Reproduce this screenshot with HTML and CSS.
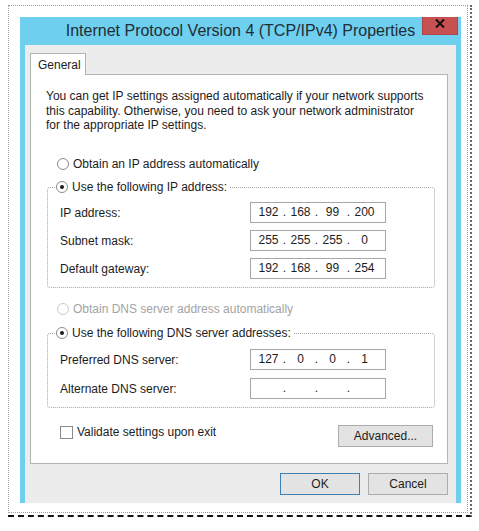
FILE: index.html
```html
<!doctype html>
<html lang="en">
    <head>
        <meta charset="UTF-8" />
        <meta name="viewport" content="width=device-width, initial-scale=1.0" />
        <title>Internet Protocol Version 4 (TCP/IPv4) Properties</title>
        <link rel="stylesheet" href="styles.css">
    </head>
    <body>
        <div class="frame">
            <div class="sheet">
                <div class="window">
                    <div class="titlebar">
                        <span></span>
                        <h1 class="title">Internet Protocol Version 4 (TCP/IPv4) Properties</h1>
                        <button class="close" type="button" aria-label="Close">
                            <svg width="10" height="9" viewBox="0 0 10 9">
                                <path d="M1 0.5 L9 8.5 M9 0.5 L1 8.5" stroke="#111" stroke-width="2" />
                            </svg>
                        </button>
                    </div>

                    <div class="client">
                        <div class="tabs">
                            <div class="tab">General</div>
                        </div>

                        <div class="panel">
                            <p class="intro">
                                You can get IP settings assigned automatically if your network supports
                                this capability. Otherwise, you need to ask your network administrator
                                for the appropriate IP settings.
                            </p>

                            <div class="option">
                                <span class="radio"></span>Obtain an IP address automatically
                            </div>

                            <fieldset class="group">
                                <legend>
                                    <span class="option"><span class="radio checked"></span>Use the following IP address:</span>
                                </legend>
                                <div class="field">
                                    <span>IP address:</span>
                                    <div class="ip">
                                        <span>192</span><i>.</i><span>168</span><i>.</i><span>99</span><i>.</i><span>200</span>
                                    </div>
                                </div>
                                <div class="field">
                                    <span>Subnet mask:</span>
                                    <div class="ip">
                                        <span>255</span><i>.</i><span>255</span><i>.</i><span>255</span><i>.</i><span>0</span>
                                    </div>
                                </div>
                                <div class="field">
                                    <span>Default gateway:</span>
                                    <div class="ip">
                                        <span>192</span><i>.</i><span>168</span><i>.</i><span>99</span><i>.</i><span>254</span>
                                    </div>
                                </div>
                            </fieldset>

                            <div class="option disabled dns-auto">
                                <span class="radio"></span>Obtain DNS server address automatically
                            </div>

                            <fieldset class="group dns">
                                <legend>
                                    <span class="option"><span class="radio checked"></span>Use the following DNS server addresses:</span>
                                </legend>
                                <div class="field">
                                    <span>Preferred DNS server:</span>
                                    <div class="ip">
                                        <span>127</span><i>.</i><span>0</span><i>.</i><span>0</span><i>.</i><span>1</span>
                                    </div>
                                </div>
                                <div class="field">
                                    <span>Alternate DNS server:</span>
                                    <div class="ip">
                                        <span></span><i>.</i><span></span><i>.</i><span></span><i>.</i><span></span>
                                    </div>
                                </div>
                            </fieldset>

                            <div class="panel-bottom">
                                <div class="check-row">
                                    <span class="checkbox"></span>Validate settings upon exit
                                </div>
                                <button class="btn advanced" type="button">Advanced...</button>
                            </div>
                        </div>

                        <div class="footer">
                            <button class="btn default" type="button">OK</button>
                            <button class="btn" type="button">Cancel</button>
                        </div>
                    </div>
                </div>
            </div>
        </div>
    </body>
</html>
```

FILE: styles.css
```css
body {
    margin: 0;
    background: #fff;
    font-family: "Liberation Sans", Arial, sans-serif;
    font-size: 12px;
    color: #1c1c1c;
}
.frame {
    width: fit-content;
    margin: 5px 0 0 8px;
    padding: 0 2px 2px 0;
    border-right: 2px dotted #666;
    border-bottom: 2px dashed #111;
}
.sheet {
    border: 1px dotted #a0a0a0;
    padding: 11px 6px 9px 11px;
}
.window {
    width: 441px;
    background: #6fcfee;
}
.titlebar {
    display: grid;
    grid-template-columns: 1fr auto 1fr;
    height: 28px;
}
.title {
    margin: 0;
    font-size: 16px;
    font-weight: normal;
    line-height: 27px;
    color: #1f2d36;
    white-space: nowrap;
}
.close {
    justify-self: end;
    align-self: start;
    width: 36px;
    height: 18px;
    margin-right: 3px;
    padding: 0 0 4px;
    border: 1px solid #b04444;
    border-top: none;
    background: #c75050;
    display: flex;
    align-items: center;
    justify-content: center;
}
.client {
    margin: 0 5px;
    padding: 8px 8px 8px 5px;
    background: #ececec;
}
.tabs {
    display: flex;
}
.tab {
    position: relative;
    z-index: 1;
    width: 56px;
    height: 22px;
    box-sizing: border-box;
    margin-bottom: -1px;
    padding-left: 7px;
    line-height: 22px;
    background: #fff;
    border: 1px solid #b4b4b4;
    border-bottom: none;
}
.panel {
    background: #fff;
    border: 1px solid #b4b4b4;
    padding: 14px 12px 16px 15px;
}
.intro {
    margin: 0;
    max-width: 384px;
    line-height: 14.5px;
}
.option {
    display: flex;
    align-items: center;
    height: 16px;
    margin: 23.5px 0 0 11px;
}
.dns-auto {
    margin-top: 13px;
}
.disabled {
    color: #a3a3a3;
}
.radio {
    width: 12px;
    height: 12px;
    box-sizing: border-box;
    margin-right: 4px;
    border: 1px solid #8a8a8a;
    border-radius: 50%;
    background: #fff;
    display: flex;
    align-items: center;
    justify-content: center;
}
.radio.checked::after {
    content: "";
    width: 4px;
    height: 4px;
    border-radius: 50%;
    background: #1c1c1c;
}
.disabled .radio {
    border-color: #cacaca;
}
.group {
    margin: 7px 0 0 1px;
    padding: 7px 12px 8px 8px;
    border: 1px dotted #a8a8a8;
    border-radius: 3px;
    display: flex;
    flex-direction: column;
    gap: 7px;
}
.group legend {
    padding: 0 3px 0 0;
}
.group legend .option {
    margin: 0;
}
.dns {
    margin-top: 8px;
    padding-top: 8px;
    padding-bottom: 8px;
    gap: 8px;
}
.field {
    display: grid;
    grid-template-columns: 190px 136px;
    align-items: center;
    height: 21px;
    margin-left: 4px;
}
.ip {
    display: flex;
    height: 21px;
    box-sizing: border-box;
    padding-left: 4px;
    border: 1px solid #a8a8a8;
    background: #fff;
    line-height: 19px;
}
.ip span {
    width: 27px;
    text-align: center;
}
.ip i {
    width: 5px;
    font-style: normal;
    text-align: center;
}
.panel-bottom {
    display: flex;
    justify-content: space-between;
    align-items: flex-start;
    margin: 17px 2px 0 14px;
}
.check-row {
    display: flex;
    align-items: center;
    height: 14px;
}
.checkbox {
    width: 13px;
    height: 13px;
    box-sizing: border-box;
    margin-right: 4px;
    border: 1px solid #8a8a8a;
    background: #fff;
}
.btn {
    height: 22px;
    width: 80px;
    padding: 0;
    font-family: inherit;
    font-size: 12px;
    color: #1c1c1c;
    background: #e3e3e3;
    border: 1px solid #acacac;
}
.advanced {
    width: 95px;
}
.default {
    border-color: #3c7fb1;
}
.footer {
    display: flex;
    justify-content: flex-end;
    gap: 8px;
    margin-top: 9px;
}
```
